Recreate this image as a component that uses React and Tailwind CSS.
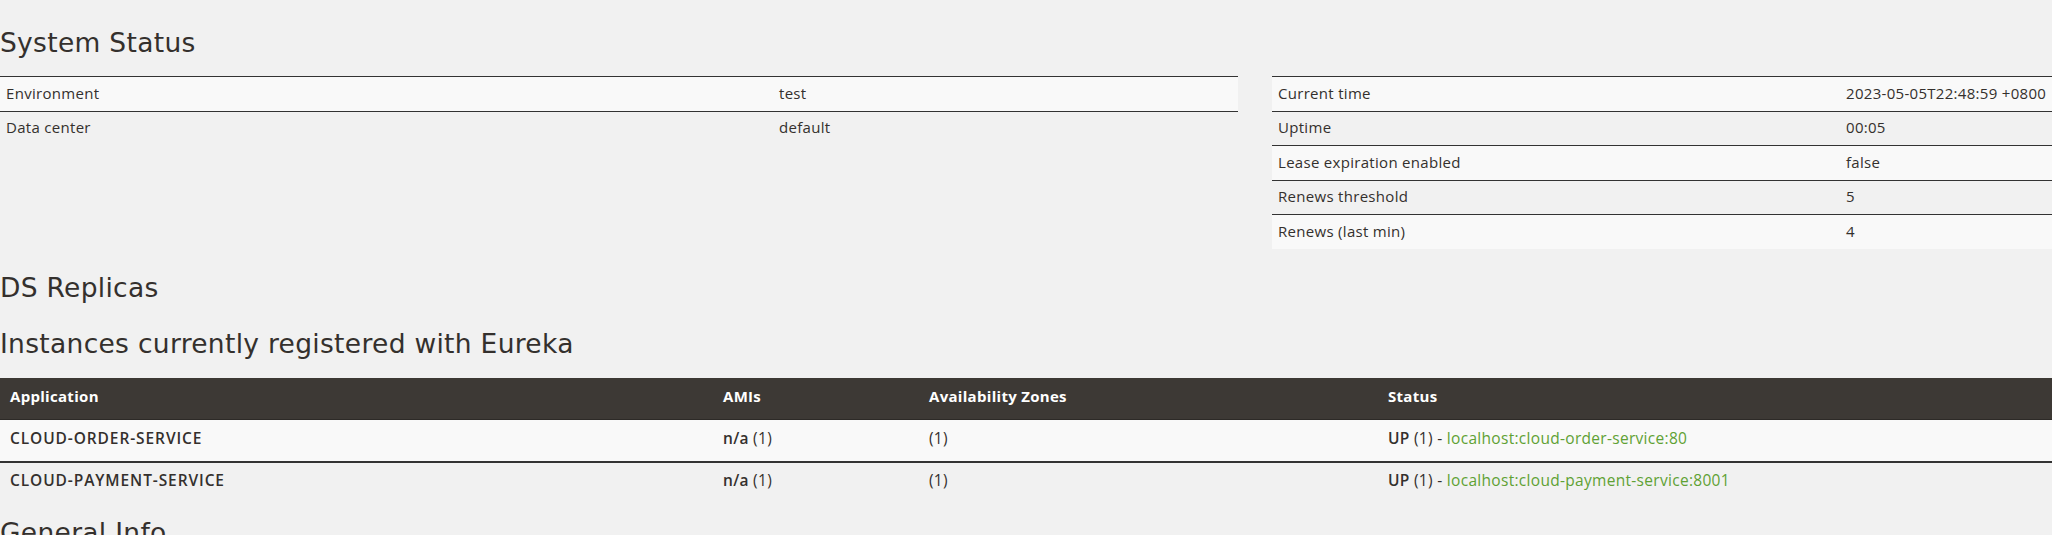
import React from 'react';

const systemLeft = [
  ['Environment', 'test'],
  ['Data center', 'default'],
];

const systemRight = [
  ['Current time', '2023-05-05T22:48:59 +0800'],
  ['Uptime', '00:05'],
  ['Lease expiration enabled', 'false'],
  ['Renews threshold', '5'],
  ['Renews (last min)', '4'],
];

const instances = [
  { name: 'CLOUD-ORDER-SERVICE', link: 'localhost:cloud-order-service:80' },
  { name: 'CLOUD-PAYMENT-SERVICE', link: 'localhost:cloud-payment-service:8001' },
];

const Heading = ({ children, className = '' }) => (
  <h1
    className={`text-[26.5px] leading-[29px] font-normal text-[#34302d] ${className}`}
    style={{ fontFamily: '"DejaVu Sans", sans-serif' }}
  >
    {children}
  </h1>
);

const StatusTable = ({ rows, labelWidth }) => (
  <div className="w-[1238px]">
    {rows.map(([label, value], i) => (
      <div
        key={label}
        className={`flex items-center h-[34.5px] pb-[2px] border-t border-[#333] ${i % 2 === 0 ? 'bg-[#f9f9f9]' : ''}`}
      >
        <div className={`${labelWidth} pl-[6px] shrink-0`}>{label}</div>
        <div className="pl-[6px] whitespace-nowrap">{value}</div>
      </div>
    ))}
  </div>
);

const App = () => {
  return (
    <div
      className="w-full h-[535px] overflow-hidden bg-[#f1f1f1] text-[#34302d] text-[15px] tracking-[0.3px]"
      style={{ fontFamily: '"Open Sans", sans-serif' }}
    >
      <div className="w-[2510px] pt-[28px]">
        <Heading className="mb-[19px]">System Status</Heading>

        <div className="flex gap-[34px] items-start">
          <StatusTable rows={systemLeft} labelWidth="w-[773px]" />
          <StatusTable rows={systemRight} labelWidth="w-[568px]" />
        </div>

        <Heading className="mt-[24.5px]">DS Replicas</Heading>
        <Heading className="mt-[27px] mb-[20px]">Instances currently registered with Eureka</Heading>

        {/* Instances table */}
        <div className="w-full">
          <div className="flex items-center h-[42px] pb-[4px] bg-[#3d3935] border-b border-[#2d2a27] text-white font-bold">
            <div className="w-[713px] pl-[10px] shrink-0">Application</div>
            <div className="w-[206px] pl-[10px] shrink-0">AMIs</div>
            <div className="w-[459px] pl-[10px] shrink-0">Availability Zones</div>
            <div className="pl-[10px]">Status</div>
          </div>
          {instances.map((inst, i) => (
            <div
              key={inst.name}
              className={`flex items-center h-[41px] pb-[4px] text-[15.5px] ${i === 0 ? 'bg-[#f9f9f9]' : 'border-t-2 border-[#333]'}`}
            >
              <div className="w-[713px] pl-[10px] shrink-0 font-semibold tracking-[0.9px]">{inst.name}</div>
              <div className="w-[206px] pl-[10px] shrink-0">
                <span className="font-semibold">n/a</span> (1)
              </div>
              <div className="w-[459px] pl-[10px] shrink-0">(1)</div>
              <div className="pl-[10px] whitespace-nowrap">
                <span className="font-semibold">UP</span> (1) -{' '}
                <a className="text-[#5fa134]">{inst.link}</a>
              </div>
            </div>
          ))}
        </div>

        <Heading className="mt-[15.5px]">General Info</Heading>
      </div>
    </div>
  );
};

export default App;
